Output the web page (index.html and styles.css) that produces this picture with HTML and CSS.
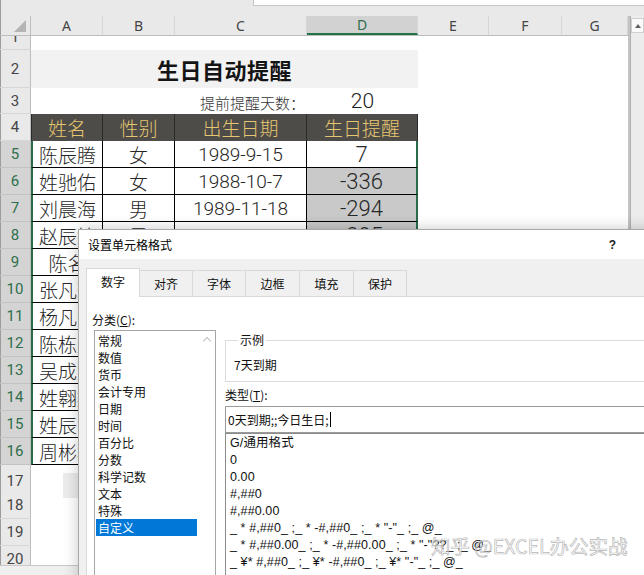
FILE: index.html
```html
<!DOCTYPE html>
<html lang="zh-CN">
<head>
<meta charset="utf-8">
<title>生日自动提醒</title>
<link rel="stylesheet" href="styles.css">
</head>
<body>
<div class="app">
  <div class="topbar"><div class="formula"></div></div>
  <div class="sheetwrap">
    <div class="sheet">
      <div class="row colhead">
        <div class="corner"><span class="tri"></span></div>
        <div class="ch">A</div><div class="ch">B</div><div class="ch">C</div><div class="ch sel">D</div><div class="ch">E</div><div class="ch">F</div><div class="ch">G</div>
      </div>
      <div class="row r1"><div class="rh"><span>1</span></div></div>
      <div class="row r2"><div class="rh">2</div><div class="title">生日自动提醒</div></div>
      <div class="row r3"><div class="rh">3</div><div class="c-label">提前提醒天数：</div><div class="c-num">20</div></div>
      <div class="row r4"><div class="rh">4</div><div class="th first">姓名</div><div class="th">性别</div><div class="th">出生日期</div><div class="th">生日提醒</div></div>
      <div class="row data"><div class="rh s">5</div><div class="td a">陈辰腾</div><div class="td">女</div><div class="td">1989-9-15</div><div class="td d">7</div></div>
      <div class="row data"><div class="rh s">6</div><div class="td a">姓驰佑</div><div class="td">女</div><div class="td">1988-10-7</div><div class="td d neg">-336</div></div>
      <div class="row data"><div class="rh s">7</div><div class="td a">刘晨海</div><div class="td">男</div><div class="td">1989-11-18</div><div class="td d neg">-294</div></div>
      <div class="row data"><div class="rh s">8</div><div class="td a">赵辰铭</div><div class="td">男</div><div class="td">1989-11-17</div><div class="td d neg">-295</div></div>
      <div class="row data"><div class="rh s">9</div><div class="td a">陈名</div><div class="td"></div><div class="td"></div><div class="td d neg"></div></div>
      <div class="row data"><div class="rh s">10</div><div class="td a">张凡瑞</div><div class="td"></div><div class="td"></div><div class="td d neg"></div></div>
      <div class="row data"><div class="rh s">11</div><div class="td a">杨凡宇</div><div class="td"></div><div class="td"></div><div class="td d neg"></div></div>
      <div class="row data"><div class="rh s">12</div><div class="td a">陈栋梁</div><div class="td"></div><div class="td"></div><div class="td d neg"></div></div>
      <div class="row data"><div class="rh s">13</div><div class="td a">吴成龙</div><div class="td"></div><div class="td"></div><div class="td d neg"></div></div>
      <div class="row data"><div class="rh s">14</div><div class="td a">姓翱翔</div><div class="td"></div><div class="td"></div><div class="td d neg"></div></div>
      <div class="row data"><div class="rh s">15</div><div class="td a">姓辰宇</div><div class="td"></div><div class="td"></div><div class="td d neg"></div></div>
      <div class="row data"><div class="rh s">16</div><div class="td a">周彬彬</div><div class="td"></div><div class="td"></div><div class="td d neg"></div></div>
      <div class="row blank"><div class="rh">17</div><div class="ghost"></div></div>
      <div class="row blank"><div class="rh">18</div></div>
      <div class="row blank"><div class="rh">19</div></div>
      <div class="row blank"><div class="rh">20</div></div>
    </div>
    <div class="vscroll"><div class="up"><span class="arrow"></span></div></div>
  </div>
  <div class="tabbar"></div>

  <div class="dialog">
    <div class="dlg-title"><span>设置单元格格式</span><span class="help">?</span></div>
    <div class="dlg-body">
      <div class="tabs">
        <div class="tab active">数字</div>
        <div class="tab w53">对齐</div>
        <div class="tab w53">字体</div>
        <div class="tab">边框</div>
        <div class="tab">填充</div>
        <div class="tab w53">保护</div>
      </div>
      <div class="panel">
        <div class="cat">
          <div class="lbl">分类(<u>C</u>):</div>
          <div class="listbox">
            <div class="items">
              <div class="item">常规</div>
              <div class="item">数值</div>
              <div class="item">货币</div>
              <div class="item">会计专用</div>
              <div class="item">日期</div>
              <div class="item">时间</div>
              <div class="item">百分比</div>
              <div class="item">分数</div>
              <div class="item">科学记数</div>
              <div class="item">文本</div>
              <div class="item">特殊</div>
              <div class="item selected">自定义</div>
            </div>
            <div class="lscroll"><span class="chev"></span></div>
          </div>
        </div>
        <div class="fmt">
          <fieldset class="sample">
            <legend>示例</legend>
            <div class="sample-text">7天到期</div>
          </fieldset>
          <div class="lbl type-lbl">类型(<u>T</u>):</div>
          <div class="input">0天到期;;今日生日;<span class="caret"></span></div>
          <div class="typelist">
            <div class="titem">G/通用格式</div>
            <div class="titem">0</div>
            <div class="titem">0.00</div>
            <div class="titem">#,##0</div>
            <div class="titem">#,##0.00</div>
            <div class="titem">_ * #,##0_ ;_ * -#,##0_ ;_ * "-"_ ;_ @_</div>
            <div class="titem">_ * #,##0.00_ ;_ * -#,##0.00_ ;_ * "-"??_ ;_ @_</div>
            <div class="titem">_ ¥* #,##0_ ;_ ¥* -#,##0_ ;_ ¥* "-"_ ;_ @_</div>
          </div>
        </div>
      </div>
    </div>
  </div>
  <div class="watermark">知乎 @EXCEL办公实战</div>
</div>
</body>
</html>
```

FILE: styles.css
```css
* { box-sizing: border-box; margin: 0; padding: 0; }
html, body { width: 644px; height: 575px; overflow: hidden; background: #fff; }
body { font-family: "Noto Sans CJK SC", sans-serif; color: #222; }

.app {
  position: relative;
  width: 644px;
  height: 575px;
  display: flex;
  flex-direction: column;
  overflow: hidden;
}

/* top strip with formula box */
.topbar {
  height: 16px;
  flex: none;
  background: #e9e9e9;
  display: flex;
  justify-content: flex-end;
  box-shadow: inset 1px 0 #9c9c9c;
}
.formula {
  width: 391px;
  height: 6px;
  background: #fff;
  border-left: 1px solid #c6c6c6;
  border-bottom: 1px solid #c6c6c6;
}

.sheetwrap { flex: 1; min-height: 0; display: flex; overflow: hidden; }
.sheet {
  width: 630px;
  flex: none;
  display: flex;
  flex-direction: column;
  border-right: 2px solid #c4c4c4;
  font-family: "Roboto", "Noto Sans CJK SC Light", "Noto Sans CJK SC DemiLight", "Noto Sans CJK SC", sans-serif;
  font-weight: 300;
  overflow: hidden;
}

.row {
  display: grid;
  grid-template-columns: 31px 72px 72px 132px 111px 71px 73px 66px;
  flex: none;
  height: 27px;
}
.row > div { min-width: 0; overflow: hidden; white-space: nowrap; }

/* column headers */
.colhead { height: 20px; background: #e9e9e9; border-bottom: 1px solid #bdbdbd; }
.corner {
  display: flex;
  align-items: flex-end;
  justify-content: flex-end;
  padding: 0 4px 3px 0;
  border-right: 1px solid #bdbdbd;
  box-shadow: inset 1px 0 #9c9c9c;
}
.tri {
  width: 0; height: 0;
  border-left: 12px solid transparent;
  border-bottom: 12px solid #b4b4b4;
}
.ch {
  display: flex;
  align-items: center;
  justify-content: center;
  font-family: "Noto Sans", sans-serif;
  font-weight: 400;
  font-size: 14px;
  color: #454545;
  border-right: 1px solid #d6d6d6;
}
.ch.sel {
  background: #d2d2d2;
  color: #2f6e4b;
  border-bottom: 2px solid #217346;
}

/* row headers */
.rh {
  display: flex;
  align-items: center;
  justify-content: center;
  background: #e9e9e9;
  border-right: 1px solid #bdbdbd;
  border-bottom: 1px solid #d6d6d6;
  box-shadow: inset 1px 0 #9c9c9c;
  font-size: 15px;
  font-weight: 400;
  color: #454545;
}
.rh.s { background: #d4d4d4; color: #2f6e4b; border-bottom-color: #c2c2c2; }

.r1 { height: 14px; }
.r1 .rh { align-items: flex-start; }
.r1 .rh span { line-height: 20px; margin-top: -9px; }

.r2 { height: 38px; }
.title {
  grid-column: 2 / 6;
  background: #f2f2f2;
  display: flex;
  align-items: center;
  justify-content: center;
  font-family: "Noto Sans CJK SC", sans-serif;
  font-weight: 700;
  font-size: 22px;
  color: #141414;
  letter-spacing: 0.5px;
}

.r3 { height: 26px; }
.c-label {
  grid-column: 2 / 5;
  display: flex;
  align-items: center;
  justify-content: flex-end;
  padding: 3px 2px 0 0;
  font-size: 15px;
  color: #333;
}
.c-num {
  display: flex;
  align-items: center;
  justify-content: center;
  font-size: 21px;
  color: #222;
}

.th {
  display: flex;
  align-items: center;
  justify-content: center;
  background: #4e4c48;
  color: #e6c670;
  font-size: 19px;
  border-right: 1px solid #2a2a2a;
}
.th.first { border-left: 1px solid #2a2a2a; }

.td {
  display: flex;
  align-items: center;
  justify-content: center;
  font-size: 19px;
  color: #262626;
  border-right: 1px solid #000;
  border-bottom: 1px solid #000;
}
.td.a { border-left: 2px solid #2a6b4a; }
.td.d { border-right: 2px solid #2a6b4a; font-size: 22px; }
.td.neg { background: #c9c9c9; }

.ghost {
  grid-column: 2;
  justify-self: start;
  width: 20px;
  height: 25px;
  margin: 8px 0 0 32px;
  background: #ececec;
}

/* vertical scrollbar */
.vscroll {
  flex: 1;
  background: #ececec;
  border-left: 1px solid #b0b0b0;
  padding-top: 2px;
}
.up {
  height: 15px;
  background: #fafafa;
  border: 1px solid #d0d0d0;
  display: flex;
  align-items: center;
  justify-content: center;
}
.arrow {
  width: 0; height: 0;
  border-left: 3px solid transparent;
  border-right: 3px solid transparent;
  border-bottom: 4px solid #606060;
}

.tabbar {
  height: 10px;
  flex: none;
  background: #efefef;
  border-top: 1px solid #c8c8c8;
}

/* dialog */
.dialog {
  position: absolute;
  left: 78px;
  top: 229px;
  width: 620px;
  height: 360px;
  background: #f0f0f0;
  border: 1px solid #a8a8a8;
  box-shadow: 0 0 14px rgba(0, 0, 0, 0.22);
  display: flex;
  flex-direction: column;
  font-family: "Noto Sans CJK SC", sans-serif;
  font-size: 12px;
  color: #000;
  z-index: 2;
}
.dlg-title {
  height: 29px;
  flex: none;
  background: #fff;
  display: flex;
  align-items: center;
  padding-left: 9px;
}
.help {
  margin-left: auto;
  margin-right: 81px;
  font-family: "Liberation Sans", sans-serif;
  font-weight: 700;
  font-size: 12px;
  color: #222;
}
.dlg-body {
  flex: 1;
  display: flex;
  flex-direction: column;
  padding: 9px 0 0 7px;
}
.tabs {
  display: flex;
  align-items: flex-start;
  height: 29px;
  margin-bottom: -1px;
  position: relative;
  z-index: 1;
}
.tab {
  width: 54px;
  height: 27px;
  margin-top: 2px;
  background: #f0f0f0;
  border: 1px solid #d9d9d9;
  border-left: none;
  display: flex;
  align-items: center;
  justify-content: center;
  line-height: 16px;
  color: #111;
}
.tab.w53 { width: 53px; }
.tab.active {
  height: 29px;
  margin-top: 0;
  background: #fff;
  border-left: 1px solid #d9d9d9;
  border-bottom: none;
  padding-bottom: 2px;
}
.panel {
  flex: 1;
  display: flex;
  background: #fff;
  border: 1px solid #d9d9d9;
}
.lbl { line-height: 16px; color: #111; }
.lbl u { text-decoration: underline; text-underline-offset: 1px; }

.cat { margin: 15px 0 0 5px; display: flex; flex-direction: column; }
.listbox {
  margin: 2px 0 0 2px;
  width: 122px;
  flex: 1;
  border: 1px solid #a6a6a6;
  display: flex;
  padding: 1px 0 0 1px;
  gap: 1px;
}
.items { width: 101px; }
.item { line-height: 17px; padding-left: 2px; color: #111; }
.item.selected { background: #0078d7; color: #fff; }
.lscroll {
  width: 17px;
  display: flex;
  justify-content: center;
  padding-top: 6px;
}
.chev {
  width: 6px; height: 6px;
  border-left: 1px solid #c2c2c2;
  border-top: 1px solid #c2c2c2;
  transform: rotate(45deg);
}

.fmt { margin-left: 9px; flex: 1; display: flex; flex-direction: column; }
.sample {
  margin-top: 35px;
  border: 1px solid #dcdcdc;
  padding: 0 0 8px 8px;
}
.sample legend {
  margin-left: 4px;
  padding: 0 2px;
  line-height: 16px;
  color: #111;
}
.sample-text { line-height: 16px; padding-top: 9px; color: #111; }
.type-lbl { margin-top: 5px; }
.input {
  margin-top: 3px;
  height: 27px;
  border: 1px solid #9a9a9a;
  padding-left: 2px;
  line-height: 25px;
  color: #111;
  display: flex;
  align-items: center;
}
.caret {
  display: inline-block;
  width: 1px;
  height: 15px;
  background: #000;
  margin-left: 1px;
}
.typelist {
  flex: 1;
  border: 1px solid #8c8c8c;
  padding: 1px 0 0 4px;
  font-family: "Liberation Sans", "Noto Sans CJK SC", sans-serif;
  font-size: 12.5px;
  letter-spacing: 0.1px;
}
.titem { line-height: 17px; white-space: nowrap; color: #111; }

.watermark {
  position: absolute;
  left: 431px;
  top: 533px;
  z-index: 3;
  font-family: "Noto Sans CJK SC", sans-serif;
  font-size: 19.5px;
  line-height: 26px;
  color: rgba(255, 255, 255, 0.55);
  -webkit-text-stroke: 0.7px rgba(160, 160, 160, 0.75);
  white-space: nowrap;
}
```
